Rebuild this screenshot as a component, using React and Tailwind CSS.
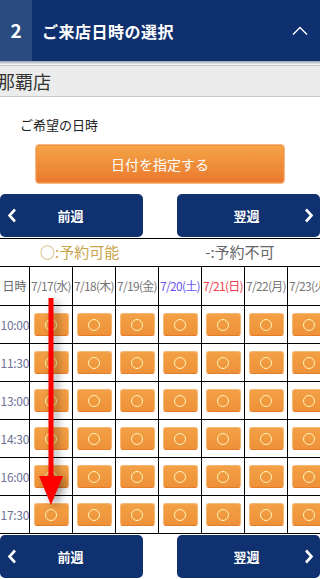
import React from "react";

const days = [
  { label: "7/17(水)", color: "text-[#777]" },
  { label: "7/18(木)", color: "text-[#777]" },
  { label: "7/19(金)", color: "text-[#777]" },
  { label: "7/20(土)", color: "text-[#6b55f0]" },
  { label: "7/21(日)", color: "text-[#f2404c]" },
  { label: "7/22(月)", color: "text-[#777]" },
  { label: "7/23(火)", color: "text-[#777]" },
];
const times = ["10:00", "11:30", "13:00", "14:30", "16:00", "17:30"];

function Slot() {
  return (
    <div className="w-[43px] h-[38px] shrink-0 border-r border-b border-black flex items-center justify-center">
      <div className="w-[35px] h-[23px] rounded-[3px] bg-gradient-to-b from-[#f3a046] to-[#ee9238] border border-[#f7b775] border-b-[#e47b28] flex items-center justify-center">
        <div className="w-[12px] h-[12px] rounded-full border border-[#fff4b8]" />
      </div>
    </div>
  );
}

function NavButton({ dir, label }) {
  return (
    <div className="w-[143px] h-[43px] rounded-[5px] bg-[#10316f] relative flex items-center justify-center">
      {dir === "prev" ? (
        <svg className="absolute left-[7px] top-[14px]" width="10" height="15" viewBox="0 0 10 15">
          <path d="M8 1.5 L2.5 7.5 L8 13.5" fill="none" stroke="white" strokeWidth="2.6" />
        </svg>
      ) : (
        <svg className="absolute right-[6px] top-[14px]" width="10" height="15" viewBox="0 0 10 15">
          <path d="M2 1.5 L7.5 7.5 L2 13.5" fill="none" stroke="white" strokeWidth="2.6" />
        </svg>
      )}
      <span className={`text-white font-bold text-[13px] ${dir === "prev" ? "ml-[-2px]" : "ml-[-4px]"}`}>{label}</span>
    </div>
  );
}

export default function App() {
  return (
    <div
      className="w-[320px] h-[579px] overflow-hidden relative bg-white"
      style={{ fontFamily: '"Noto Sans CJK JP", "Noto Sans", sans-serif' }}
    >
      {/* header */}
      <div className="flex h-[61px] bg-[#0f306e]">
        <div className="w-[32px] bg-[#2a4b80] flex items-center justify-center text-white font-bold text-[19px]">2</div>
        <div className="flex-1 flex items-center pl-[10px] text-white font-bold text-[16px] tracking-[0.5px]">ご来店日時の選択</div>
        <div className="w-[40px] flex items-center justify-center">
          <svg width="16" height="10" viewBox="0 0 16 10">
            <path d="M1 8.5 L8 1.5 L15 8.5" fill="none" stroke="white" strokeWidth="1.4" />
          </svg>
        </div>
      </div>
      <div className="h-[4px] bg-gradient-to-b from-[#9ca3af] to-white" />
      <div className="h-[32px] bg-[#ececec] border-y border-[#c8c8c8] flex items-center text-[18px] text-[#333] pl-[0px]">
        <span className="ml-[-3px]">那覇店</span>
      </div>

      <div className="pt-[19px] pl-[20px] text-[13px] text-[#222] leading-[18px]">ご希望の日時</div>

      <div className="mt-[10px] ml-[35px] w-[250px] h-[40px] rounded-[4px] bg-gradient-to-b from-[#f5a547] to-[#e9782e] border border-[#f7b983] flex items-center justify-center shadow-[inset_0_0_0_1px_#f19040]">
        <span className="text-white text-[14px]">日付を指定する</span>
      </div>

      <div className="mt-[10px] flex justify-between">
        <NavButton dir="prev" label="前週" />
        <NavButton dir="next" label="翌週" />
      </div>

      {/* legend */}
      <div className="mt-[1px] border-t border-black h-[28px] flex items-center text-[15px]">
        <span className="ml-[40px] text-[#c9a54a]">○:予約可能</span>
        <span className="ml-[86px] text-[#666]">-:予約不可</span>
      </div>

      {/* table */}
      <div className="border-t border-black w-[331px]">
        <div className="flex">
          <div className="w-[30px] h-[39px] shrink-0 border-r border-b border-black flex items-center justify-center text-[12px] text-[#666]">日時</div>
          {days.map((d) => (
            <div
              key={d.label}
              className={`w-[43px] h-[39px] shrink-0 border-r border-b border-black flex items-center justify-center text-[12px] whitespace-nowrap tracking-[-0.7px] ${d.color}`}
            >
              {d.label}
            </div>
          ))}
        </div>
        {times.map((t) => (
          <div className="flex" key={t}>
            <div className="w-[30px] h-[38px] shrink-0 border-r border-b border-black flex items-center justify-end text-[12px] tracking-[-0.3px] text-[#6e7196] whitespace-nowrap">
              {t}
            </div>
            {days.map((d) => (
              <Slot key={d.label} />
            ))}
          </div>
        ))}
      </div>

      <div className="mt-[1px] flex justify-between">
        <NavButton dir="prev" label="前週" />
        <NavButton dir="next" label="翌週" />
      </div>

      {/* red annotation arrow */}
      <svg className="absolute left-[36px] top-[296px]" width="40" height="220" viewBox="0 0 40 220" style={{ filter: "drop-shadow(4px 3px 4px rgba(0,0,0,0.4))" }}>
        <path d="M12.5 2 L17.5 2 L17.5 180 L27 180 L15 209 L3 180 L12.5 180 Z" fill="#ff0000" />
      </svg>
    </div>
  );
}
